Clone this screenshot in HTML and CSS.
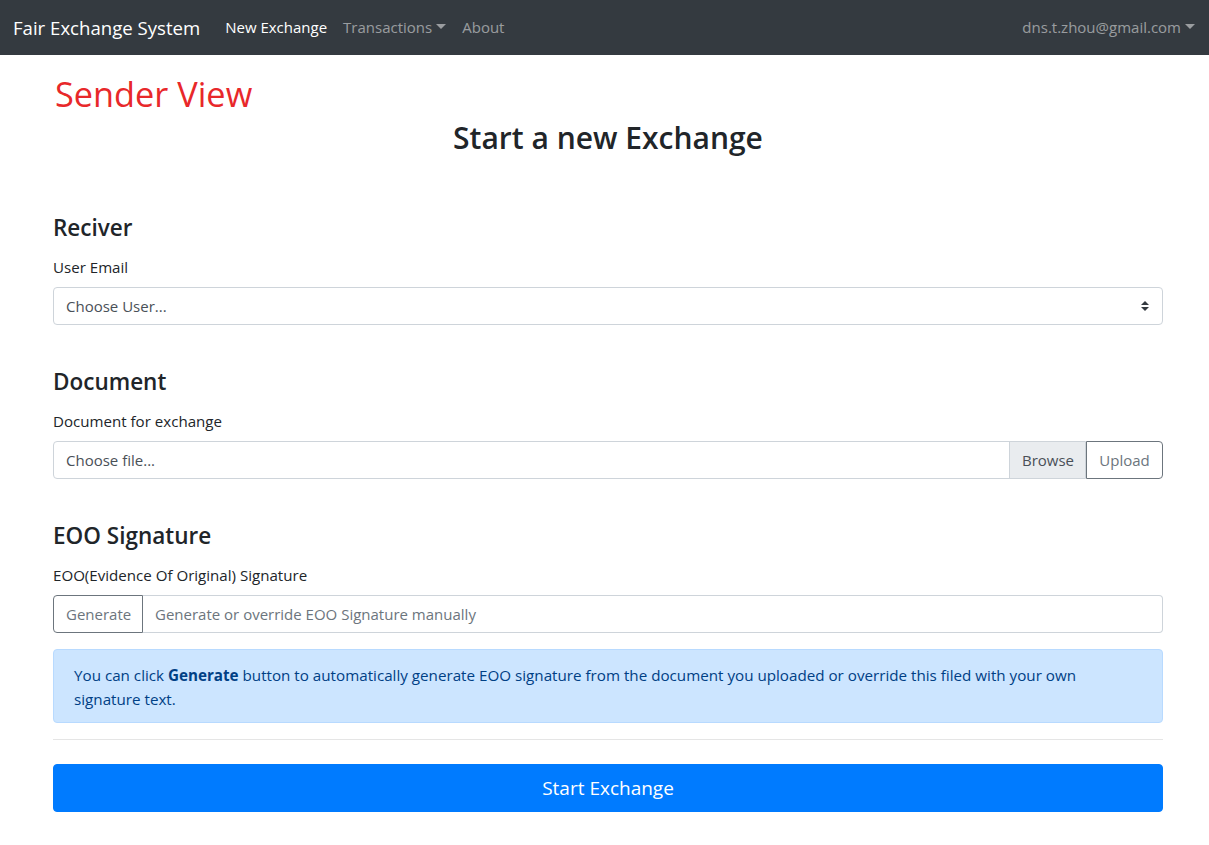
FILE: index.html
```html
<!DOCTYPE html>
<html>
<head>
<meta charset="utf-8">
<link rel="stylesheet" href="styles.css">
</head>
<body>
<nav class="navbar">
  <a class="brand">Fair Exchange System</a>
  <ul class="nav">
    <li class="nav-link active">New Exchange</li>
    <li class="nav-link">Transactions<span class="caret"></span></li>
    <li class="nav-link">About</li>
  </ul>
  <div class="nav-right nav-link">dns.t.zhou@gmail.com<span class="caret"></span></div>
</nav>
<main class="container">
  <h1 class="sender">Sender View</h1>
  <h2 class="title">Start a new Exchange</h2>

  <section class="section">
    <h4 class="sec-title">Reciver</h4>
    <label class="label">User Email</label>
    <div class="select">
      <span>Choose User...</span>
      <svg class="select-arrow" width="8" height="10" viewBox="0 0 4 5"><path fill="#343a40" d="M2 0L0 2h4zm0 5L0 3h4z"/></svg>
    </div>
  </section>

  <section class="section">
    <h4 class="sec-title">Document</h4>
    <label class="label">Document for exchange</label>
    <div class="input-group">
      <div class="file">
        <span class="file-text">Choose file...</span>
        <span class="browse">Browse</span>
      </div>
      <button class="btn-outline upload">Upload</button>
    </div>
  </section>

  <section class="section">
    <h4 class="sec-title">EOO Signature</h4>
    <label class="label">EOO(Evidence Of Original) Signature</label>
    <div class="input-group">
      <button class="btn-outline generate">Generate</button>
      <div class="text-input">Generate or override EOO Signature manually</div>
    </div>
    <div class="alert">You can click <b>Generate</b> button to automatically generate EOO signature from the document you uploaded or override this filed with your own signature text.</div>
  </section>

  <hr class="divider">
  <button class="btn-primary">Start Exchange</button>
</main>
</body>
</html>
```
FILE: styles.css
```css
* { box-sizing: border-box; }
body {
  margin: 0;
  font-family: "Open Sans", "Noto Sans", sans-serif;
  font-size: 15px;
  line-height: 1.5;
  color: #212529;
  background: #fff;
}
.navbar {
  height: 55px;
  background: #343a40;
  display: flex;
  align-items: center;
  padding: 0 14px 0 13px;
}
.brand {
  color: #fff;
  font-size: 18.6px;
  margin-right: 17px;
  white-space: nowrap;
}
.nav {
  display: flex;
  list-style: none;
  margin: 0;
  padding: 0;
}
.nav-link {
  color: rgba(255,255,255,.5);
  font-size: 15px;
  padding: 0 8px;
  white-space: nowrap;
  display: flex;
  align-items: center;
}
.nav-link.active { color: #fff; }
.caret {
  display: inline-block;
  margin-left: 4px;
  border-top: 5px solid currentColor;
  border-left: 5px solid transparent;
  border-right: 5px solid transparent;
  margin-top: -2px;
}
.nav-right { margin-left: auto; padding-right: 0; }

.container {
  padding: 0 46px 40px 53px;
}
.sender {
  margin: 15px 0 0 2px;
  font-weight: 400;
  font-size: 34.3px;
  line-height: 48px;
  color: #e8282a;
}
.title {
  margin: 0;
  text-align: center;
  font-size: 30px;
  font-weight: 600;
  line-height: 39px;
}
.section { display: flex; flex-direction: column; }
.sec-title {
  margin: 42px 0 13px;
  font-size: 22.5px;
  font-weight: 600;
  line-height: 29px;
}
.section:first-of-type .sec-title { margin-top: 56px; }
.label {
  display: block;
  font-size: 15.1px;
  line-height: 24px;
  margin-bottom: 8px;
}
.select {
  height: 38px;
  border: 1px solid #ced4da;
  border-radius: 4px;
  display: flex;
  align-items: center;
  justify-content: space-between;
  padding: 0 13px 0 12px;
  color: #495057;
  font-size: 15px;
}
.input-group {
  display: flex;
  height: 38px;
}
.file {
  flex: 1;
  display: flex;
  border: 1px solid #ced4da;
  border-radius: 4px 0 0 4px;
  overflow: hidden;
}
.file-text {
  flex: 1;
  display: flex;
  align-items: center;
  padding: 0 12px;
  color: #495057;
  font-size: 15px;
}
.browse {
  display: flex;
  align-items: center;
  background: #e9ecef;
  border-left: 1px solid #ced4da;
  color: #495057;
  padding: 0 12px;
  font-size: 15px;
  width: 76px;
}
.btn-outline {
  font-family: inherit;
  background: #fff;
  border: 1px solid #6c757d;
  color: #6c757d;
  font-size: 15px;
  padding: 0 12px;
  height: 38px;
  margin: 0;
}
.upload { border-radius: 0 4px 4px 0; width: 77px; }
.generate { border-radius: 4px 0 0 4px; width: 90px; }
.text-input {
  flex: 1;
  border: 1px solid #ced4da;
  border-left: 0;
  border-radius: 0 4px 4px 0;
  display: flex;
  align-items: center;
  padding: 0 12px;
  color: #6c757d;
  font-size: 15px;
}
.alert {
  margin-top: 16px;
  background: #cce5ff;
  border: 1px solid #b8daff;
  border-radius: 4px;
  color: #004085;
  padding: 13px 20px 11px;
  font-size: 15.2px;
  line-height: 24px;
  min-height: 74px;
}
.alert b { font-weight: 700; }
.divider {
  margin: 16px 0 24px;
  border: 0;
  border-top: 1px solid rgba(0,0,0,.1);
}
.btn-primary {
  display: block;
  width: 100%;
  height: 48px;
  font-family: inherit;
  font-size: 19px;
  color: #fff;
  background: #007bff;
  border: 1px solid #007bff;
  border-radius: 4px;
}
```
